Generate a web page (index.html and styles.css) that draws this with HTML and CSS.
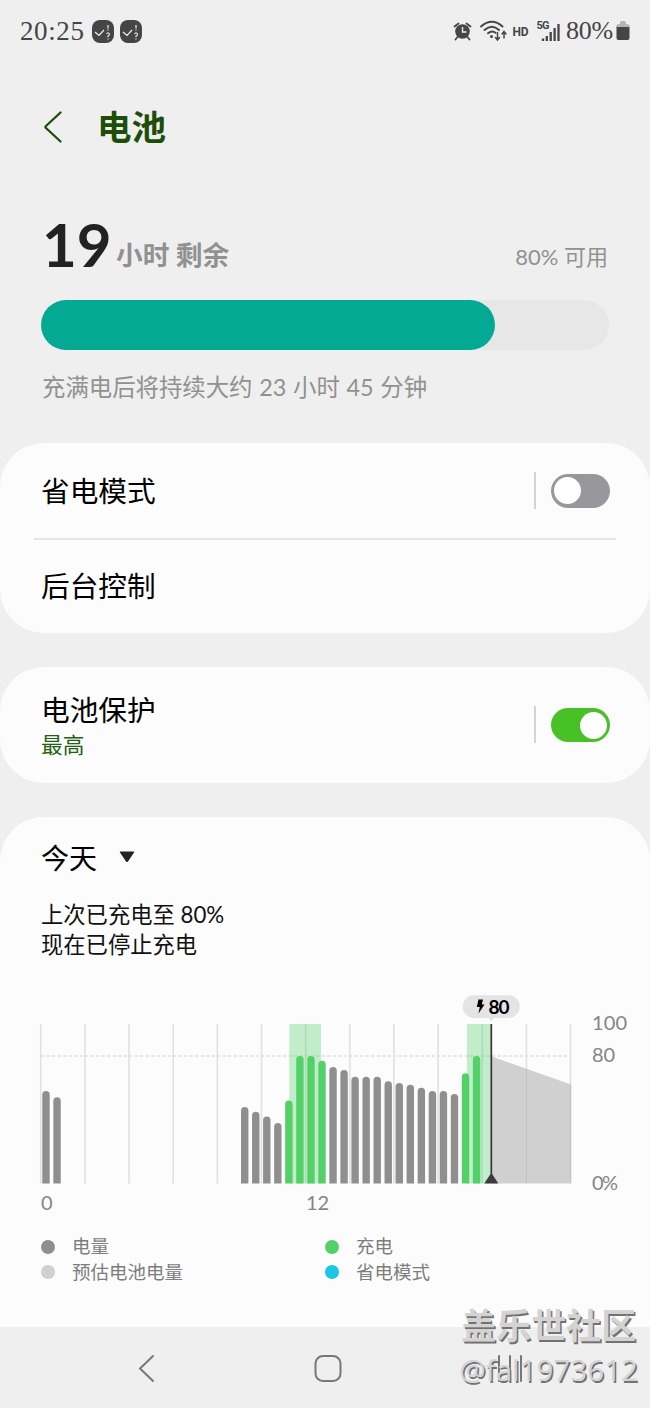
FILE: index.html
```html
<!DOCTYPE html>
<html lang="zh-CN">
<head>
  <meta charset="UTF-8" />
  <meta name="viewport" content="width=device-width, initial-scale=1" />
  <title>电池</title>
  <link rel="stylesheet" href="styles.css">
</head>
<body>
  <div class="statusbar">
    <span class="clock">20:25</span>
    <svg class="notice" width="22" height="23" viewBox="0 0 22 23">
      <rect width="22" height="23" rx="8" fill="#454545"/>
      <path d="M3 12l4 3.5L12 10M16 5v3.500M16 9.500v1M14.500 14q1.500-2.500 3 0q0 1.500-1.500 2v1.200M16 18.400v1" fill="none" stroke="#eee" stroke-width="1.200"/>
    </svg>
    <svg class="notice" width="22" height="23" viewBox="0 0 22 23">
      <rect width="22" height="23" rx="8" fill="#454545"/>
      <path d="M3 12l4 3.5L12 10M16 5v3.500M16 9.500v1M14.500 14q1.500-2.500 3 0q0 1.500-1.500 2v1.200M16 18.400v1" fill="none" stroke="#eee" stroke-width="1.200"/>
    </svg>
    <svg class="signals" width="110" height="26" viewBox="450 18 110 26">
      <!-- alarm -->
      <circle cx="462.5" cy="31.5" r="7.3" fill="#454545"/>
      <path d="M454.5 26.5l4-3M466.5 23.500l4 3M457.500 37l-2 2.500M467.500 37l2 2.500" stroke="#454545" stroke-width="1.8" stroke-linecap="round"/>
      <path d="M462.500 27v5h4" fill="none" stroke="#efefef" stroke-width="1.4"/>
      <!-- wifi -->
      <g fill="none" stroke="#454545" stroke-width="1.9" stroke-linecap="round">
        <path d="M481 26.500q11-9.500 21.500 0M484.500 30q7.500-6.500 14.500 0M488 33.300q4-3.300 7.500-.5"/>
        <path d="M497.500 32.500v7M495.500 37.500l2 2.500 2-2.500M504 38v-6M502 34l2-2.500 2 2.500" stroke-width="1.5"/>
      </g>
      <circle cx="491.500" cy="36.500" r="1.500" fill="#454545"/>
      <text x="512.500" y="35.500" class="hd" textLength="16">HD</text>
      <text x="536.500" y="29" class="net" textLength="13">5G</text>
      <path d="M543 38.500v2.500M546.800 36v5M550.700 32v9M554.600 28v13M558.500 24v17" stroke="#454545" stroke-width="2.300"/>
    </svg>
    <span class="percent">80%</span>
    <svg width="14" height="20" viewBox="0 0 14 20">
      <path d="M4 3V1.500Q4 0 5.500 0h3Q10 0 10 1.500V3q4 0 4 3H0q0-3 4-3z" fill="#b5b5b5"/>
      <path d="M.5 6h13v11q0 2-2 2h-9q-2 0-2-2z" fill="#454545"/>
    </svg>
  </div>

  <div class="header">
    <svg width="20" height="32" viewBox="0 0 20 32">
      <path d="M17.500 1.500L3 15q-1.200 1 0 2l14.500 13.500" fill="none" stroke="#1c4e09" stroke-width="2.300" stroke-linecap="round"/>
    </svg>
    <h1>电池</h1>
  </div>

  <div class="summary">
    <div class="remaining"><b>19</b><span class="unit">小时 剩余</span></div>
    <div class="available">80% 可用</div>
  </div>
  <div class="level"><div class="level-fill" style="width: 80%"></div></div>
  <div class="estimate">充满电后将持续大约 23 小时 45 分钟</div>

  <div class="card modes">
    <div class="row">
      <span class="name">省电模式</span>
      <span class="switch"></span>
    </div>
    <div class="row second">
      <span class="name">后台控制</span>
    </div>
  </div>

  <div class="card protect">
    <div class="row">
      <div>
        <div class="name">电池保护</div>
        <div class="sub">最高</div>
      </div>
      <span class="switch on"></span>
    </div>
  </div>

  <div class="card usage">
    <div class="day">今天
      <svg width="16" height="12" viewBox="0 0 16 12"><path d="M1.500.5h13q1.200 0 .5 1L9 10.500q-1 1.200-2 0L1 1.500q-.7-1 .5-1z" fill="#222"/></svg>
    </div>
    <div class="charged">上次已充电至 80%<br>现在已停止充电</div>

    <svg class="chart" width="650" height="230" viewBox="0 990 650 230">
      <path class="grid" d="M40.700 1024v159.500M84.900 1024v159.500M129 1024v159.500M173.200 1024v159.500M217.300 1024v159.500M261.500 1024v159.500M305.600 1024v159.500M349.800 1024v159.500M393.900 1024v159.500M438.100 1024v159.500M482.200 1024v159.500M526.400 1024v159.500M570.500 1024v159.500"/>
      <path d="M41 1056h530" stroke="#dfdfdf" stroke-width="1.500" stroke-dasharray="3.500 2"/>
      <path d="M289.300 1024h31.700v159.500h-31.700zM467 1024h23.500v159.500H467z" fill="#53d169" fill-opacity=".34"/>
      <path d="M492 1056.500l79 28v99h-79z" fill="#d0d0d0"/>
      <path d="M526.400 1069v114M570.500 1085v98" stroke="#c4c4c4" stroke-width="1.300"/>
      <g id="bars"></g>
      <path d="M491.300 1024v159" stroke="#333" stroke-width="1.700"/>
      <path d="M484.300 1183.500l5.700-8.800q1.300-1.700 2.600 0l5.700 8.800z" fill="#3b3b3b"/>
      <path d="M474 995.300h34.500a11.300 11.300 0 0 1 0 22.600H494l-2.700 3.200-2.700-3.200H474a11.300 11.300 0 0 1 0-22.600z" fill="#e4e4e5"/>
      <path d="M478.500 999.500h4.500l-1.200 5h2.700l-6 9 1.300-6.500h-3z" fill="#000"/>
      <text class="bubble" x="488.500" y="1013.500" textLength="21">80</text>
      <text class="axis" x="592" y="1030" textLength="35">100</text>
      <text class="axis" x="592" y="1062" textLength="23">80</text>
      <text class="axis" x="592" y="1189.500" textLength="26">0%</text>
      <text class="axis" x="41" y="1210">0</text>
      <text class="axis" x="306" y="1210" textLength="23">12</text>
    </svg>

    <div class="legend">
      <span><i class="dot used"></i>电量</span>
      <span><i class="dot charging"></i>充电</span>
      <span><i class="dot expected"></i>预估电池电量</span>
      <span><i class="dot saving"></i>省电模式</span>
    </div>
  </div>

  <div class="navbar">
    <svg width="650" height="81" viewBox="0 1327 650 81" fill="none" stroke="#777" stroke-width="2" stroke-linecap="round">
      <path d="M153 1356l-13 12.500 13 12.500"/>
      <rect x="315.500" y="1356" width="25" height="25" rx="7.500"/>
      <path d="M499 1356v25M510 1356v25M521 1356v25"/>
    </svg>
  </div>

  <div class="watermark">
    <div class="site">盖乐世社区</div>
    <div class="user">@fal1973612</div>
  </div>

  <script>
    // [half-hour slot, top of the bar, charging]
    const bars = [
      [0, 1091], [1, 1097.3],
      [18, 1107], [19, 1111.7], [20, 1116.5], [21, 1123],
      [22, 1100.5, 1], [23, 1056, 1], [24, 1056, 1], [25, 1060.7, 1],
      [26, 1067], [27, 1070], [28, 1076.7], [29, 1076.7], [30, 1076.7],
      [31, 1081.3], [32, 1083], [33, 1084.7], [34, 1087.7], [35, 1091],
      [36, 1091], [37, 1094], [38, 1073.3, 1], [39, 1056, 1]
    ];
    document.getElementById('bars').innerHTML = bars.map(([slot, top, charging]) => {
      const x = 42.3 + slot * 11.04;
      return `<path d="M${x} 1183.5V${top + 3.7}a3.7 3.7 0 0 1 7.4 0V1183.5z" fill="${charging ? '#53d169' : '#8f8f8f'}"/>`;
    }).join('');
  </script>
</body>
</html>
```
FILE: styles.css
```css
* {
  box-sizing: border-box;
}

body {
  margin: 0;
  width: 650px;
  height: 1408px;
  overflow: hidden;
  position: relative;
  background: #efefef;
  color: #000;
  font-family: Lato, "Noto Sans CJK SC", sans-serif;
}

svg {
  display: block;
  flex: none;
}

.statusbar {
  display: flex;
  align-items: center;
  height: 62px;
  padding: 0 20px;
  color: #454545;
  font-family: "Liberation Serif", serif;
}

.clock {
  width: 72px;
  font-size: 27px;
  letter-spacing: 0.6px;
}

.notice {
  margin-right: 6px;
}

.signals {
  margin-left: auto;
}

.hd {
  font: bold 12px Roboto, sans-serif;
  fill: #454545;
}

.net {
  font: bold 11px Roboto, sans-serif;
  fill: #454545;
}

.percent {
  width: 50px;
  margin-left: 6px;
  font-size: 26px;
  letter-spacing: -0.2px;
}

.header {
  display: flex;
  align-items: center;
  height: 130px;
  padding: 0 43px;
  color: #1c4e09;
}

.header h1 {
  margin: 0 0 0 34px;
  font-size: 34.5px;
  line-height: 50px;
}

.summary {
  display: flex;
  justify-content: space-between;
  height: 108px;
  padding: 0 42px;
  color: #919191;
}

.remaining {
  display: flex;
}

.remaining b {
  width: 74px;
  font-size: 60px;
  line-height: 105px;
  color: #222;
}

.unit {
  font-size: 26.7px;
  font-weight: bold;
  line-height: 127px;
}

.available {
  font-size: 22px;
  line-height: 130px;
}

.level {
  width: 568px;
  height: 50px;
  margin-left: 41px;
  border-radius: 25px;
  background: #e7e7e7;
}

.level-fill {
  height: 100%;
  border-radius: 25px;
  background: #04a994;
}

.estimate {
  height: 93px;
  padding: 20px 42px 0;
  font-size: 23.4px;
  line-height: 34px;
  word-spacing: 0.7px;
  color: #919191;
}

.card {
  border-radius: 44px;
  background: #fcfcfc;
}

.modes {
  height: 190px;
  margin-bottom: 34px;
}

.row {
  display: flex;
  align-items: center;
  justify-content: space-between;
  height: 95px;
  padding: 0 6px 0 7px;
  margin: 0 34px;
}

.second {
  height: 93px;
  border-top: 2px solid #e4e4e4;
}

.name {
  font-size: 28.7px;
  line-height: 40px;
}

.switch {
  position: relative;
  width: 59px;
  height: 34px;
  border-radius: 17px;
  background: #98979c;
}

.switch::before {
  content: "";
  position: absolute;
  left: -17px;
  top: -2px;
  width: 2px;
  height: 37px;
  background: #d4d4d4;
}

.switch::after {
  content: "";
  position: absolute;
  left: 3px;
  top: 3.5px;
  width: 27px;
  height: 27px;
  border-radius: 50%;
  background: #fff;
}

.switch.on {
  background: #48c126;
}

.switch.on::after {
  left: 29px;
}

.protect {
  height: 116px;
  margin-bottom: 34px;
}

.protect .row {
  height: 116px;
}

.sub {
  font-size: 21.7px;
  line-height: 30px;
  color: #1e6310;
}

.usage {
  height: 510px;
  border-radius: 44px 44px 0 0;
}

.day {
  display: flex;
  align-items: center;
  gap: 22px;
  height: 80px;
  padding-left: 41px;
  font-size: 28px;
}

.charged {
  height: 93px;
  padding: 3px 41px 0;
  font-size: 22.3px;
  line-height: 30px;
  color: #111;
}

.grid {
  stroke: #e2e2e2;
  stroke-width: 1.7;
}

.axis {
  font-size: 20px;
  fill: #858585;
}

.bubble {
  font-size: 19px;
  font-weight: bold;
}

.legend {
  display: grid;
  grid-template-columns: 284px 1fr;
  grid-auto-rows: 25.5px;
  padding: 14px 41px 0;
  font-size: 18.5px;
  line-height: 25.5px;
  color: #7d7d7d;
}

.legend span {
  display: flex;
  align-items: center;
}

.dot {
  width: 14px;
  height: 14px;
  margin-right: 17px;
  border-radius: 50%;
}

.used {
  background: #8f8f8f;
}

.charging {
  background: #53d169;
}

.expected {
  background: #d0d0d0;
}

.saving {
  background: #18c8e2;
}

.navbar {
  height: 81px;
  background: #efefef;
}

/* lies over the navigation bar */
.watermark {
  position: absolute;
  right: 12px;
  bottom: 15px;
  color: #d5d3d2;
  text-shadow: 1.5px 1.5px 0 #707274;
  white-space: nowrap;
}

.site {
  padding-left: 2px;
  font-size: 35px;
  font-weight: bold;
  line-height: 44px;
}

.user {
  font-family: "Open Sans", sans-serif;
  font-size: 29.6px;
  line-height: 46px;
}
```
